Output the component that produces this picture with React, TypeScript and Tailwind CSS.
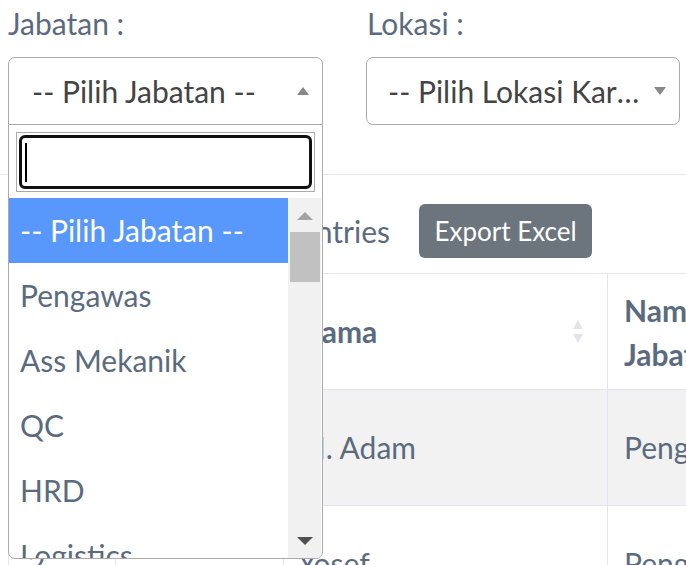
const options = ["Pengawas", "Ass Mekanik", "QC", "HRD", "Logistics", "Admin"];

const rows = [
  { no: "1", nik: "2011 0987", nama: "M. Adam", jabatan: "Pengawas" },
  { no: "2", nik: "2011 1102", nama: "Yosef", jabatan: "Pengawas" },
];

function SortIcon() {
  return (
    <div className="flex flex-col items-center gap-[5px]">
      <span className="border-x-[5px] border-x-transparent border-b-[9px] border-b-[#e2e4ea]" />
      <span className="border-x-[5px] border-x-transparent border-t-[9px] border-t-[#e2e4ea]" />
    </div>
  );
}

export default function App() {
  return (
    <div className="relative w-[686px] h-[565px] overflow-hidden bg-white font-['Lato',sans-serif] text-[#5b6b7f] text-[30px]">
      {/* filters */}
      <div className="flex gap-[43px] pl-2 pt-[6px]">
        <div className="relative w-[315px] shrink-0">
          <label className="block leading-[34px]">Jabatan :</label>
          <div className="mt-[17px] h-[68px] flex items-center pl-[23px] pr-[13px] border border-[#aaa] rounded-t-[7px] text-[#444]">
            <span className="flex-1">-- Pilih Jabatan --</span>
            <span className="border-x-[6px] border-x-transparent border-b-[8px] border-b-[#888]" />
          </div>

          {/* open dropdown */}
          <div className="absolute left-0 top-[118px] z-10 w-[315px] h-[435px] flex flex-col bg-white border border-[#aaa] rounded-b-[7px] overflow-hidden">
            <div className="p-[7px] pb-[6px]">
              <div className="relative h-[60px] border border-[#aaa] bg-white">
                <div className="absolute inset-[2px] border-[3px] border-[#111] rounded-[6px]" />
                <div className="absolute left-[8px] top-[10px] w-[2px] h-[39px] bg-black" />
              </div>
            </div>
            <div className="flex flex-1 min-h-0">
              <ul className="w-[279px] overflow-hidden">
                <li className="h-[65px] flex items-center pl-[11px] bg-[#5897fb] text-white">-- Pilih Jabatan --</li>
                {options.map((o) => (
                  <li key={o} className="h-[65px] flex items-center pl-[11px] whitespace-nowrap">
                    {o}
                  </li>
                ))}
              </ul>
              <div className="w-[33px] bg-[#f1f1f1] flex flex-col items-center pt-[14px] pb-[13px]">
                <span className="border-x-[8px] border-x-transparent border-b-[8px] border-b-[#a3a3a3]" />
                <div className="mt-[12px] w-[30px] h-[50px] bg-[#c1c1c1]" />
                <div className="flex-1" />
                <span className="border-x-[8px] border-x-transparent border-t-[8px] border-t-[#505050]" />
              </div>
            </div>
          </div>
        </div>

        <div className="w-[314px] shrink-0">
          <label className="block leading-[34px] pl-px">Lokasi :</label>
          <div className="mt-[17px] h-[68px] flex items-center pl-[21px] pr-[13px] border border-[#aaa] rounded-[7px] text-[#444]">
            <span className="flex-1 min-w-0 truncate pr-[10px]">-- Pilih Lokasi Karyawan --</span>
            <span className="border-x-[6px] border-x-transparent border-t-[8px] border-t-[#888]" />
          </div>
        </div>
      </div>

      <div className="mt-[49px] h-px bg-[#e3e6f0]" />

      {/* toolbar */}
      <div className="mt-[29px] flex items-center pl-2">
        <div className="w-[382px] flex items-center justify-end gap-[10px]">
          <span>Show</span>
          <span className="h-[48px] px-3 flex items-center border border-[#d1d3e2] rounded-[6px]">10</span>
          <span>entries</span>
        </div>
        <button className="ml-[29px] h-[54px] w-[173px] rounded-[6px] bg-[#6c757d] text-white text-[26px]">
          Export Excel
        </button>
      </div>

      {/* table */}
      <table className="mt-[15px] ml-2 w-[799px] table-fixed border-collapse">
        <colgroup>
          <col className="w-[107px]" />
          <col className="w-[168px]" />
          <col className="w-[324px]" />
          <col className="w-[200px]" />
        </colgroup>
        <thead>
          <tr className="h-[116px] border-y border-[#e3e6f0]">
            <th className="border-x border-[#e3e6f0] px-[19px] text-left font-bold">No</th>
            <th className="border-x border-[#e3e6f0] px-[19px] text-left font-bold">NIK</th>
            <th className="border-x border-[#e3e6f0] pl-[15px] pr-[24px] text-left font-bold">
              <div className="flex items-center justify-between">
                <span>Nama</span>
                <SortIcon />
              </div>
            </th>
            <th className="border-x border-[#e3e6f0] pl-[16px] pr-[40px] text-left font-bold leading-[44px]">
              Nama Jabatan
            </th>
          </tr>
        </thead>
        <tbody>
          {rows.map((r, i) => (
            <tr key={r.no} className={`h-[116px] border-b border-[#e3e6f0] ${i % 2 === 0 ? "bg-[#f2f2f2]" : "bg-white"}`}>
              <td className="border-x border-[#e3e6f0] px-[19px]">{r.no}</td>
              <td className="border-x border-[#e3e6f0] px-[19px]">{r.nik}</td>
              <td className="border-x border-[#e3e6f0] pl-[14px] pr-[19px]">{r.nama}</td>
              <td className="border-x border-[#e3e6f0] px-[16px] whitespace-nowrap">{r.jabatan}</td>
            </tr>
          ))}
        </tbody>
      </table>
    </div>
  );
}
